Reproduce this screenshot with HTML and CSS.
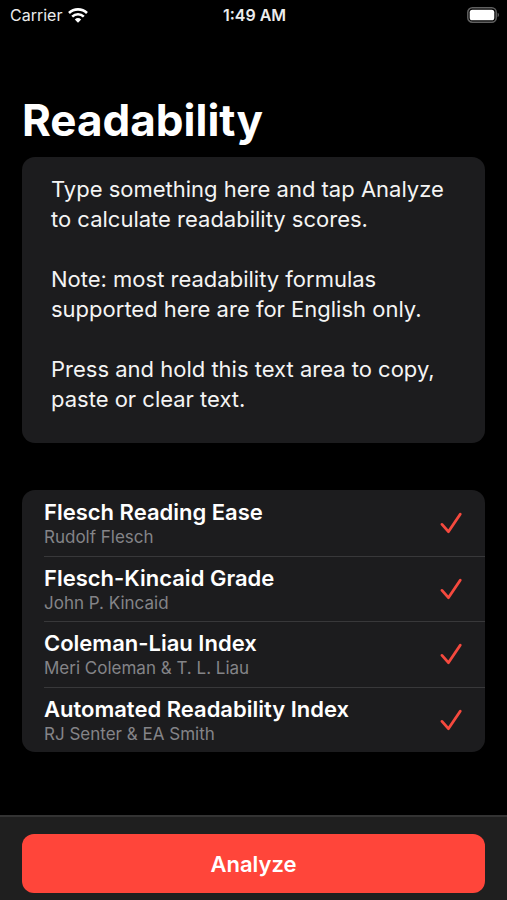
FILE: index.html
```html
<!DOCTYPE html>
<html lang="en">
<head>
<meta charset="utf-8">
<meta name="viewport" content="width=device-width, initial-scale=1">
<title>Readability</title>
<link rel="stylesheet" href="styles.css">
</head>
<body>
<header class="status">
  <div class="carrier">Carrier
    <svg class="wifi" viewBox="0 0 20 15" aria-hidden="true"><path d="M1 5a13 13 0 0 1 18 0M4.2 8.6a8.4 8.4 0 0 1 11.6 0" fill="none" stroke="#fff" stroke-width="2.6"/><path d="M6.8 11.4a5 5 0 0 1 6.4 0L10 14.8z" fill="#fff"/></svg>
  </div>
  <div class="time">1:49 AM</div>
  <svg class="battery" viewBox="0 0 32 16" aria-hidden="true"><rect x=".8" y=".8" width="28.4" height="14.4" rx="4.5" fill="none" stroke="#606060" stroke-width="1.5"/><rect x="2.7" y="2.7" width="24.6" height="10.6" rx="2.6" fill="#fff"/><path d="M30.6 5.8q1.4.6 1.4 2.2t-1.4 2.2z" fill="#606060"/></svg>
</header>
<main class="content">
  <h1 class="title">Readability</h1>
  <textarea class="editor" aria-label="Text to analyze" rows="8">Type something here and tap Analyze
to calculate readability scores.

Note: most readability formulas
supported here are for English only.

Press and hold this text area to copy,
paste or clear text.</textarea>
  <ul class="list">
    <li class="row"><div class="label"><div class="name">Flesch Reading Ease</div><div class="author">Rudolf Flesch</div></div><svg class="check" viewBox="0 0 22 22" aria-hidden="true"><path d="M2 12.4l6.4 7.3L20.2 2.2"/></svg></li>
    <li class="row"><div class="label"><div class="name">Flesch-Kincaid Grade</div><div class="author">John P. Kincaid</div></div><svg class="check" viewBox="0 0 22 22" aria-hidden="true"><path d="M2 12.4l6.4 7.3L20.2 2.2"/></svg></li>
    <li class="row"><div class="label"><div class="name">Coleman-Liau Index</div><div class="author">Meri Coleman &amp; T. L. Liau</div></div><svg class="check" viewBox="0 0 22 22" aria-hidden="true"><path d="M2 12.4l6.4 7.3L20.2 2.2"/></svg></li>
    <li class="row"><div class="label"><div class="name">Automated Readability Index</div><div class="author">RJ Senter &amp; EA Smith</div></div><svg class="check" viewBox="0 0 22 22" aria-hidden="true"><path d="M2 12.4l6.4 7.3L20.2 2.2"/></svg></li>
  </ul>
</main>
<footer class="toolbar"><button class="analyze" type="button">Analyze</button></footer>
</body>
</html>
```
FILE: styles.css
```css
* { box-sizing: border-box; }
body {
  margin: 0;
  min-height: 100vh;
  display: flex;
  flex-direction: column;
  background: #000;
  color: #fff;
  font-family: Inter, "Liberation Sans", sans-serif;
}
.status {
  display: grid;
  grid-template-columns: 1fr auto 1fr;
  align-items: center;
  height: 30px;
  padding: 0 8px 0 10px;
  font-size: 16px;
  color: #ececec;
}
.carrier { display: flex; align-items: center; gap: 6px; }
.wifi { width: 20px; height: 15px; }
.time { font-weight: 600; }
.battery { width: 32px; height: 16px; justify-self: end; }
.content { flex: 1; padding: 64px 22px 0; }
.title { margin: 0; font-size: 44px; line-height: 52px; font-weight: 700; }
.editor {
  display: block;
  width: 100%;
  height: 286px;
  margin: 11px 0 47px;
  padding: 17px 20px 17px 29px;
  border: 0;
  border-radius: 13px;
  background: #1c1c1e;
  color: #f4f4f4;
  font: 22px/30px Inter, "Liberation Sans", sans-serif;
  resize: none;
  outline: none;
  overflow: hidden;
}
.list {
  display: grid;
  grid-auto-rows: 1fr;
  min-height: 262px;
  list-style: none;
  margin: 0;
  padding: 0 0 0 22px;
  border-radius: 13px;
  background: #1c1c1e;
}
.row { display: flex; align-items: center; justify-content: space-between; padding: 7px 23px 7px 0; }
.row + .row { border-top: 1px solid #38383a; }
.name { font-size: 22px; line-height: 28px; font-weight: 600; }
.author { font-size: 17px; line-height: 22px; color: #848488; }
.check { width: 22px; height: 22px; fill: none; stroke: #f5493e; stroke-width: 2.8; stroke-linecap: round; stroke-linejoin: round; }
.toolbar { padding: 17px 22px 7px; border-top: 2px solid #333; background: #1f1f1f; }
.analyze {
  display: block;
  width: 100%;
  height: 59px;
  border: 0;
  border-radius: 12px;
  background: #ff453a;
  color: #fff;
  font: 600 22px/28px Inter, "Liberation Sans", sans-serif;
}
```
